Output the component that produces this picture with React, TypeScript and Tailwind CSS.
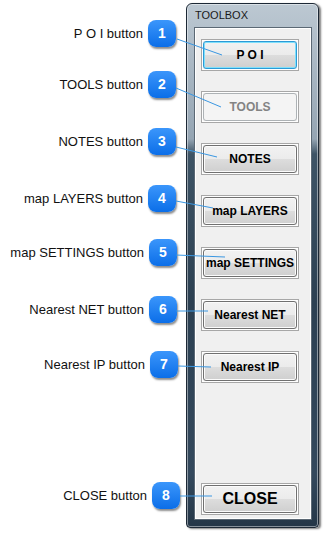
import React from 'react';

interface Callout {
  num: number;
  label: string;
  mt: string;
  pr: string;
}

const callouts: Callout[] = [
  { num: 1, label: 'P O I button', mt: 'mt-[20px]', pr: 'pr-[10px]' },
  { num: 2, label: 'TOOLS button', mt: 'mt-[24px]', pr: 'pr-[10px]' },
  { num: 3, label: 'NOTES button', mt: 'mt-[30px]', pr: 'pr-[10px]' },
  { num: 4, label: 'map LAYERS button', mt: 'mt-[30px]', pr: 'pr-[10px]' },
  { num: 5, label: 'map SETTINGS button', mt: 'mt-[27px]', pr: 'pr-[9px]' },
  { num: 6, label: 'Nearest NET button', mt: 'mt-[30px]', pr: 'pr-[9px]' },
  { num: 7, label: 'Nearest IP button', mt: 'mt-[28px]', pr: 'pr-[8px]' },
  { num: 8, label: 'CLOSE button', mt: 'mt-[104px]', pr: 'pr-[6px]' },
];

// leader lines: badge edge -> button face
const leaders = [
  [177, 39, 222, 55],
  [176, 88, 221, 107],
  [176, 147, 217, 157],
  [176, 201, 213, 208],
  [176, 255, 225, 257],
  [176, 311, 208, 311],
  [178, 366, 211, 367],
  [180, 496, 212, 496],
];

const ToolButton: React.FC<{ label: string; focused?: boolean; disabled?: boolean; big?: boolean; className?: string }> = ({
  label,
  focused,
  disabled,
  big,
  className = '',
}) => (
  <div className={`w-[98px] h-[32px] border border-[#a7a7a7] p-px bg-[#f0f0f0] shadow-[inset_0_0_0_1px_#ffffff] ${className}`}>
    <div
      className={`h-full flex items-center justify-center rounded-[3px] border ${
        disabled
          ? 'border-[#adb2b5] bg-[#f4f4f4] text-[#838383] font-bold'
          : focused
          ? 'border-[#2c9ad6] shadow-[inset_0_0_0_1px_#7fe0fb] bg-[linear-gradient(to_bottom,#f2f2f2_0%,#ebebeb_50%,#dddddd_50%,#cfcfcf_100%)] text-black font-bold'
          : 'border-[#707070] shadow-[inset_0_0_0_1px_#fbfbfb] bg-[linear-gradient(to_bottom,#f2f2f2_0%,#ebebeb_50%,#dddddd_50%,#cfcfcf_100%)] text-black font-bold'
      } ${big ? 'text-[16px]' : 'text-[12px]'}`}
    >
      {label}
    </div>
  </div>
);

export default function App() {
  return (
    <div className="relative w-[327px] h-[534px] bg-white flex font-['Liberation_Sans',Arial,sans-serif] overflow-hidden">
      {/* callout labels */}
      <div className="w-[186px] flex flex-col">
        {callouts.map((c) => (
          <div key={c.num} className={`flex items-center justify-end gap-[5px] h-[27px] ${c.mt} ${c.pr}`}>
            <span className="text-[13px] text-[#111]">{c.label}</span>
            <div className="w-[28px] h-[27px] rounded-[8px] flex items-center justify-center bg-[linear-gradient(to_bottom,#3b96fb,#0b6ee8)] shadow-[1px_2px_2px_rgba(0,0,0,0.45)] text-white font-bold text-[14px]">
              {c.num}
            </div>
          </div>
        ))}
      </div>

      {/* toolbox window */}
      <div className="mt-[3px] w-[133px] h-[525px] rounded-t-[6px] rounded-b-[4px] border border-[#1c2835] shadow-[inset_0_0_0_1px_rgba(255,255,255,0.45),2px_1px_2px_rgba(0,0,0,0.5)] bg-[linear-gradient(to_bottom,#bcc8d2_0px,#aab8c4_60px,#95a5b3_135px,#3e5466_150px,#2c4052_300px,#34495d_470px,#243647_100%)] flex flex-col">
        <div className="h-[23px] pl-[8px] pt-[6px] text-[11px] leading-none text-[#1a1a1a]">TOOLBOX</div>
        <div className="ml-[7px] mr-[6px] mb-[7px] flex-1 border border-[#5b6874] bg-[#f0f0f0] shadow-[inset_0_0_0_1px_#ffffff] flex flex-col pl-[6px] pt-[11px]">
          <div className="flex flex-col gap-[20px]">
            <ToolButton label="P O I" focused />
            <ToolButton label="TOOLS" disabled />
            <ToolButton label="NOTES" />
            <ToolButton label="map LAYERS" />
            <ToolButton label="map SETTINGS" />
            <ToolButton label="Nearest NET" />
            <ToolButton label="Nearest IP" />
          </div>
          <ToolButton label="CLOSE" big className="mt-auto mb-[4px]" />
        </div>
      </div>

      {/* leader lines over the buttons */}
      <svg className="absolute inset-0 pointer-events-none" width="327" height="534">
        {leaders.map(([x1, y1, x2, y2], i) => (
          <line key={i} x1={x1} y1={y1} x2={x2} y2={y2} stroke="#3a97e2" strokeWidth="1" />
        ))}
      </svg>
    </div>
  );
}
